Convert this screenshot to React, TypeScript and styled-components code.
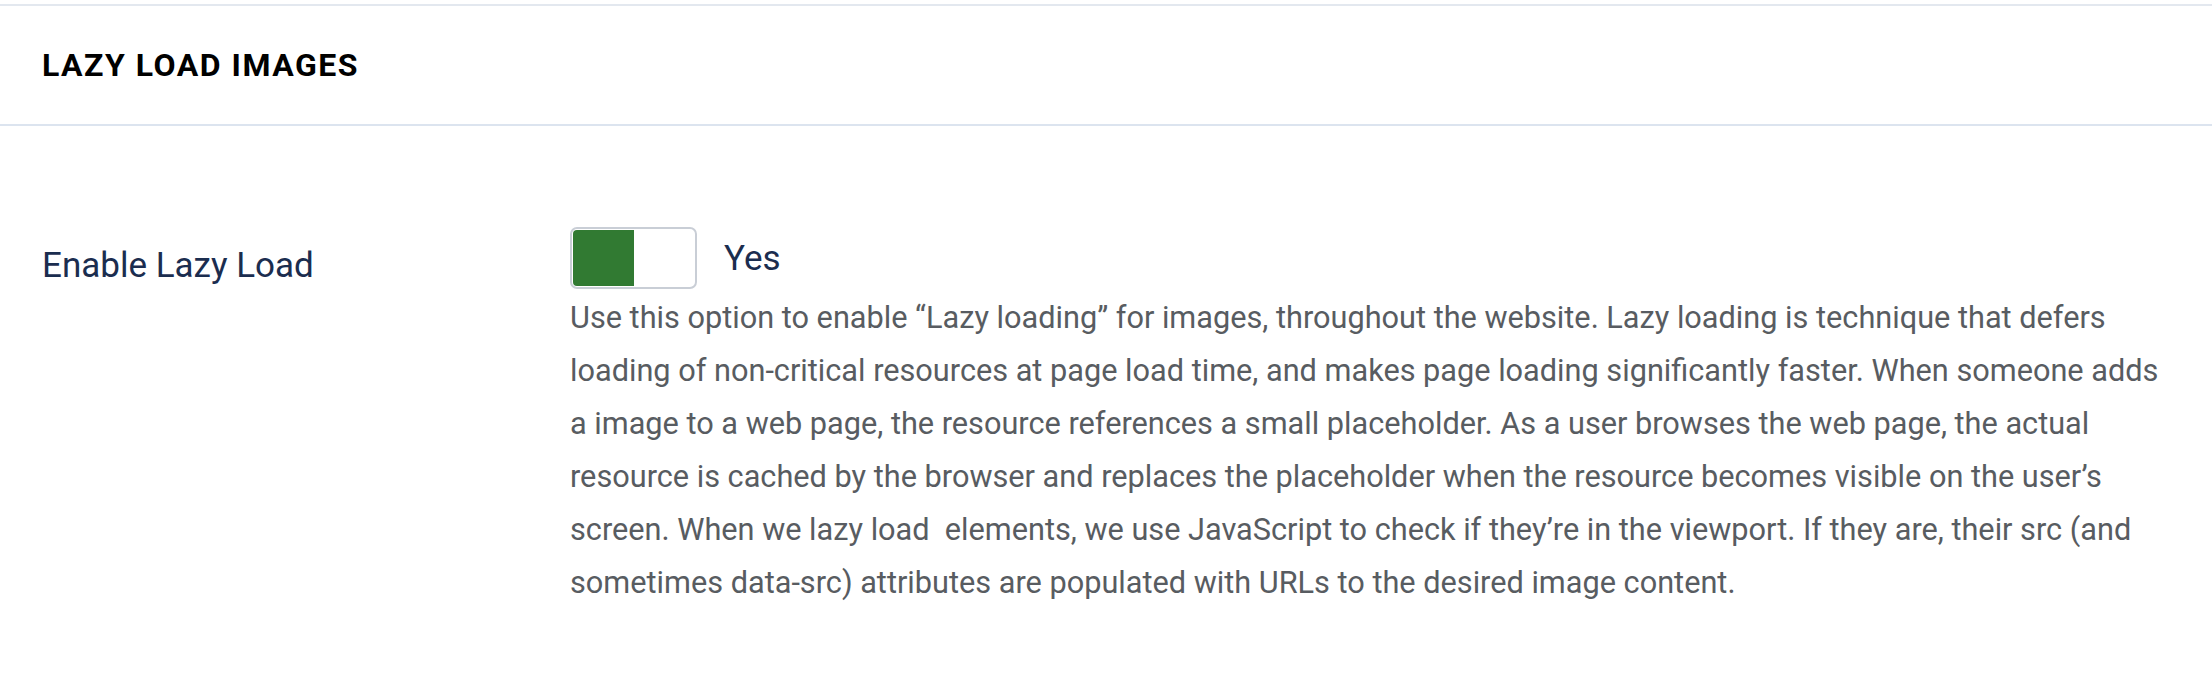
import React, { useState } from "react";
import styled, { createGlobalStyle } from "styled-components";

const GlobalStyle = createGlobalStyle`
  html, body {
    margin: 0;
    padding: 0;
    background: #ffffff;
  }

  body {
    font-family: Roboto, "Liberation Sans", Arial, sans-serif;
    -webkit-font-smoothing: antialiased;
  }
`;

const Page = styled.div`
  padding-top: 4px;
  width: 100%;
`;

const Panel = styled.section`
  border-top: 2px solid #e3e8ef;
  background: #ffffff;
`;

const PanelHeader = styled.header`
  display: flex;
  align-items: center;
  height: 118px;
  padding: 0 42px;
  border-bottom: 2px solid #dce4ef;
`;

const PanelTitle = styled.h2`
  margin: 0;
  font-size: 32px;
  font-weight: 700;
  letter-spacing: 1.5px;
  text-transform: uppercase;
  color: #000000;
`;

const PanelBody = styled.div`
  padding: 101px 42px 60px;
`;

const FieldRow = styled.div`
  display: grid;
  grid-template-columns: 528px 1fr;
  align-items: start;
`;

const FieldLabel = styled.label`
  padding-top: 17px;
  font-size: 35px;
  line-height: 44px;
  color: #1b2d4f;
`;

const FieldControl = styled.div`
  display: flex;
  flex-direction: column;
  max-width: 1600px;
`;

const SwitchLine = styled.div`
  display: flex;
  align-items: center;
  gap: 27px;
`;

const Switch = styled.button<{ $on: boolean }>`
  display: flex;
  width: 127px;
  height: 62px;
  padding: 1px;
  border: 2px solid #c9ced6;
  border-radius: 7px;
  background: #ffffff;
  cursor: pointer;
  overflow: hidden;

  span {
    display: block;
    width: 50%;
    height: 100%;
    border-radius: 4px 0 0 4px;
    background: ${(p) => (p.$on ? "#317a32" : "transparent")};
    margin-left: ${(p) => (p.$on ? "0" : "50%")};
  }
`;

const SwitchText = styled.span`
  font-size: 35px;
  color: #1b2d4f;
  margin-top: 0;
`;

const Description = styled.p`
  margin: 2px 0 0;
  font-size: 30.7px;
  line-height: 53px;
  color: #585c61;
`;

const App = () => {
  const [enabled, setEnabled] = useState(true);

  return (
    <Page>
      <GlobalStyle />
      <Panel>
        <PanelHeader>
          <PanelTitle>Lazy Load Images</PanelTitle>
        </PanelHeader>
        <PanelBody>
          <FieldRow>
            <FieldLabel>Enable Lazy Load</FieldLabel>
            <FieldControl>
              <SwitchLine>
                <Switch $on={enabled} onClick={() => setEnabled(!enabled)}>
                  <span />
                </Switch>
                <SwitchText>{enabled ? "Yes" : "No"}</SwitchText>
              </SwitchLine>
              <Description>
                Use this option to enable “Lazy loading” for images, throughout
                the website. Lazy loading is technique that defers loading of
                non-critical resources at page load time, and makes page loading
                significantly faster. When someone adds a image to a web page,
                the resource references a small placeholder. As a user browses
                the web page, the actual resource is cached by the browser and
                replaces the placeholder when the resource becomes visible on
                the user’s screen. When we lazy load&nbsp; elements, we use
                JavaScript to check if they’re in the viewport. If they are,
                their src (and sometimes data-src) attributes are populated with
                URLs to the desired image content.
              </Description>
            </FieldControl>
          </FieldRow>
        </PanelBody>
      </Panel>
    </Page>
  );
};

export default App;
